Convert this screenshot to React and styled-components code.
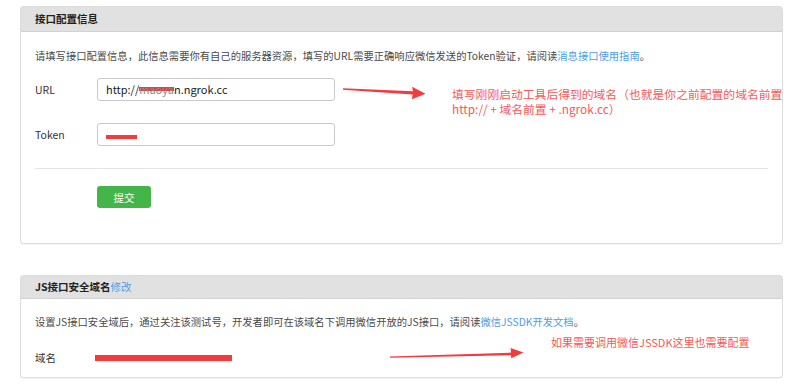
import React from "react";
import styled, { createGlobalStyle } from "styled-components";

const Global = createGlobalStyle`
  html, body { margin: 0; padding: 0; background: #fff; }
  body { font-family: "Noto Sans CJK SC", "Noto Sans", sans-serif; color: #333; }
`;

const Page = styled.div`
  position: relative;
  width: 800px;
  height: 391px;
  padding: 6px 0 0 20px;
  box-sizing: border-box;
  overflow: hidden;
`;

const Card = styled.section`
  width: 763px;
  box-sizing: border-box;
  border: 1px solid #dcdcdc;
  border-radius: 3px;
  box-shadow: 0 1px 1px rgba(0, 0, 0, 0.04);
  margin-bottom: ${(p) => p.$gap || 0}px;
  background: #fff;
`;

const Header = styled.div`
  height: ${(p) => p.$h}px;
  line-height: ${(p) => p.$h}px;
  background: #e1e1e1;
  border-bottom: 1px solid #d2d2d2;
  padding: 0 14px;
  font-size: 10.5px;
  font-weight: bold;
  color: #222;
`;

const Link = styled.a`
  color: #4d9de6;
  text-decoration: none;
  font-weight: normal;
`;

const Body = styled.div`
  padding: ${(p) => p.$pad};
`;

const Desc = styled.p`
  margin: 0;
  font-size: 10.3px;
  line-height: 14px;
  color: #4a4a4a;
`;

const Row = styled.div`
  display: flex;
  align-items: center;
  height: 23px;
  margin-top: ${(p) => p.$mt}px;
`;

const Label = styled.span`
  width: 62px;
  font-size: 10.5px;
  color: #333;
`;

const Input = styled.div`
  width: 238px;
  height: 23px;
  box-sizing: border-box;
  border: 1px solid #c9c9c9;
  border-radius: 3px;
  padding: 0 8px;
  font-size: 11px;
  line-height: 21px;
  color: #222;
  background: #fff;
  white-space: nowrap;
`;

const Scribble = styled.span`
  color: #888;
  background: linear-gradient(
    transparent ${(p) => p.$from}%,
    #f43b3b ${(p) => p.$from}%,
    #f43b3b ${(p) => p.$to}%,
    transparent ${(p) => p.$to}%
  );
`;

const Bar = styled.span`
  display: inline-block;
  width: ${(p) => p.$w}px;
  height: ${(p) => p.$h}px;
  background: #f43b3b;
  margin-left: ${(p) => p.$ml || 0}px;
  margin-top: ${(p) => p.$mt || 0}px;
  vertical-align: middle;
`;

const Divider = styled.hr`
  border: 0;
  border-top: 1px solid #e3e3e3;
  margin: 22px 0 0;
`;

const Button = styled.button`
  display: block;
  margin: 17px 0 0 62px;
  width: 54px;
  height: 22px;
  border: 0;
  border-radius: 3px;
  background: #44b549;
  color: #fff;
  font-family: inherit;
  font-size: 10.5px;
  padding: 0;
`;

const Note = styled.div`
  position: absolute;
  left: ${(p) => p.$x}px;
  top: ${(p) => p.$y}px;
  color: #f55a5a;
  font-size: ${(p) => p.$fs}px;
  white-space: nowrap;
`;

const NoteLine = styled.div`
  height: 15px;
  line-height: 15px;
`;

const Arrow = styled.svg`
  position: absolute;
  left: 0;
  top: 0;
  pointer-events: none;
`;

export default function App() {
  return (
    <>
      <Global />
      <Page>
        <Card $gap={31}>
          <Header $h={24}>接口配置信息</Header>
          <Body $pad="17px 14px 35px">
            <Desc>
              请填写接口配置信息，此信息需要你有自己的服务器资源，填写的URL需要正确响应微信发送的Token验证，请阅读
              <Link href="#">消息接口使用指南</Link>。
            </Desc>
            <Row $mt={15}>
              <Label>URL</Label>
              <Input>
                http://<Scribble $from={40} $to={64}>maoya</Scribble>n.ngrok.cc
              </Input>
            </Row>
            <Row $mt={22}>
              <Label>Token</Label>
              <Input>
                <Bar $w={31} $h={4} $mt={1} />
              </Input>
            </Row>
            <Divider />
            <Button>提交</Button>
          </Body>
        </Card>
        <Card>
          <Header $h={22}>
            JS接口安全域名<Link href="#">修改</Link>
          </Header>
          <Body $pad="16px 14px 8px">
            <Desc>
              设置JS接口安全域后，通过关注该测试号，开发者即可在该域名下调用微信开放的JS接口，请阅读
              <Link href="#">微信JSSDK开发文档</Link>。
            </Desc>
            <Row $mt={17}>
              <Label>域名</Label>
              <Bar $w={137} $h={6} $ml={-2} $mt={1} />
            </Row>
          </Body>
        </Card>

        <Arrow width="800" height="391" viewBox="0 0 800 391">
          <path d="M343 88.2 L413 91.2 L412 86.8 L425.5 93.8 L412 99.2 L412.6 94.6 L343 89.8 Z" fill="#f43b3b" />
          <path d="M390 356.6 L511 352.6 L510.6 348 L523.5 352.6 L511.2 358.2 L511 355.2 L390 357.8 Z" fill="#f43b3b" />
        </Arrow>
        <Note $x={452} $y={86} $fs={11.8}>
          <NoteLine>填写刚刚启动工具后得到的域名（也就是你之前配置的域名前置</NoteLine>
          <NoteLine>http:// + 域名前置 + .ngrok.cc）</NoteLine>
        </Note>
        <Note $x={551} $y={335} $fs={11}>
          <NoteLine>如果需要调用微信JSSDK这里也需要配置</NoteLine>
        </Note>
      </Page>
    </>
  );
}
